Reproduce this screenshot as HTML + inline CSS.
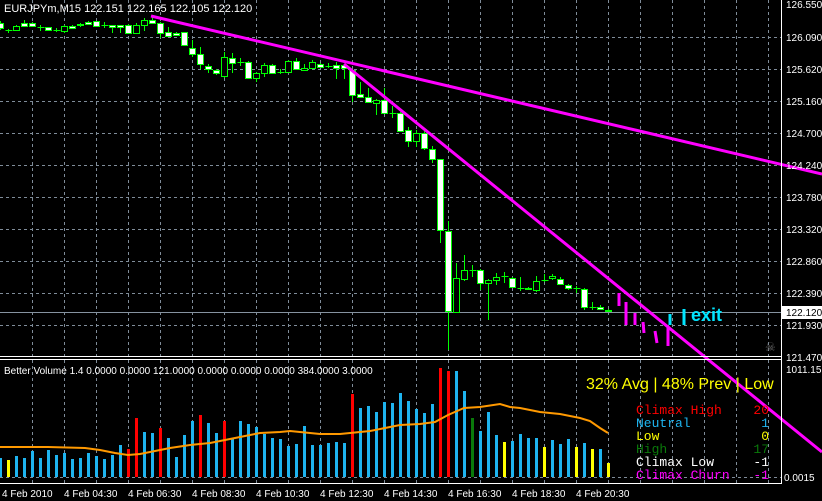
<!DOCTYPE html>
<html><head><meta charset="utf-8"><style>
html,body{margin:0;padding:0;background:#000;width:822px;height:501px;overflow:hidden}
svg{display:block}
text{font-family:"Liberation Sans",sans-serif}
text.m{font-family:"Liberation Mono",monospace;font-size:13px}
</style></head><body>
<svg id="s" width="822" height="501" xmlns="http://www.w3.org/2000/svg">
<rect width="822" height="501" fill="#000"/>
<g id="grid" stroke="#7f8c99" stroke-width="1" stroke-dasharray="3,3"></g>
<line x1="0" y1="312.5" x2="781" y2="312.5" stroke="#8693a0"/>
<g id="candles"></g>
<g id="vol"></g>
<polyline fill="none" stroke="#ff9900" stroke-width="2" points="0,447 48,447 85,448 100,450 115,453 128,455 140,454 150,452 170,448 190,445 210,443 230,439 250,435 260,433 280,432 290,431 300,432 320,434 340,434 350,433 370,431 390,427 400,425 420,424 435,422 448,415 464,408 480,407 500,404 510,407 520,408 540,412 560,414 580,418 590,421 600,428 608,433"/>
<g stroke="#ff00ff" stroke-width="3" fill="none">
<line x1="151" y1="16" x2="822" y2="174"/>
<line x1="344" y1="64" x2="822" y2="452"/>
</g>
<g stroke="#ff00ff" stroke-width="3">
<line x1="619" y1="293" x2="619" y2="306"/>
<line x1="626" y1="302" x2="626" y2="325"/>
<line x1="635" y1="313" x2="635" y2="325"/>
<line x1="643" y1="322" x2="644" y2="333"/>
<line x1="655" y1="331" x2="657" y2="343"/>
<line x1="668" y1="326" x2="668" y2="346"/>
</g>
<g stroke="#00e5ff" stroke-width="3">
<line x1="670" y1="314" x2="670" y2="325"/>
<line x1="684" y1="309" x2="684" y2="325"/>
</g>
<text x="691" y="321" fill="#00e5ff" font-size="18" font-weight="bold">exit</text>
<text x="4" y="12" fill="#fff" font-size="11">EURJPYm,M15  122.151 122.165 122.105 122.120</text>
<line x1="0" y1="356.5" x2="781" y2="356.5" stroke="#fff"/>
<line x1="0" y1="359.5" x2="781" y2="359.5" stroke="#fff"/>
<line x1="0" y1="483.5" x2="781" y2="483.5" stroke="#fff"/>
<line x1="781.5" y1="0" x2="781.5" y2="484" stroke="#fff"/>
<text x="4" y="374" fill="#fff" font-size="10">Better Volume 1.4 0.0000 0.0000 121.0000 0.0000 0.0000 0.0000 384.0000 3.0000</text>
<text x="586" y="389" fill="#ffff00" font-size="16">32% Avg | 48% Prev | Low</text>
<text class="m" x="636" y="414" fill="#ff0000">Climax High</text><text class="m" x="769" y="414" fill="#ff0000" text-anchor="end">20</text>
<text class="m" x="636" y="427" fill="#1eb4ef">Neutral</text><text class="m" x="769" y="427" fill="#1eb4ef" text-anchor="end">1</text>
<text class="m" x="636" y="440" fill="#ffff00">Low</text><text class="m" x="769" y="440" fill="#ffff00" text-anchor="end">0</text>
<text class="m" x="636" y="453" fill="#0a7a0a">High</text><text class="m" x="769" y="453" fill="#0a7a0a" text-anchor="end">17</text>
<text class="m" x="636" y="466" fill="#fff">Climax Low</text><text class="m" x="769" y="466" fill="#fff" text-anchor="end">-1</text>
<text class="m" x="636" y="479" fill="#ff00ff">Climax Churn</text><text class="m" x="769" y="479" fill="#ff00ff" text-anchor="end">-1</text>
<g fill="#fff" font-size="10">
<text x="786" y="8">126.550</text><text x="786" y="41">126.090</text><text x="786" y="73">125.620</text>
<text x="786" y="105">125.160</text><text x="786" y="137">124.700</text><text x="786" y="169">124.240</text>
<text x="786" y="201">123.780</text><text x="786" y="233">123.320</text><text x="786" y="265">122.860</text>
<text x="786" y="297">122.390</text><text x="786" y="329">121.930</text><text x="786" y="361">121.470</text>
<text x="786" y="373">1011.15</text><text x="784" y="481">0.0015</text>
</g>
<rect x="782" y="306" width="40" height="13" fill="#fff"/>
<text x="786" y="316" fill="#000" font-size="10">122.120</text>
<text x="765" y="351" fill="#666" font-size="12">☠</text>
<g fill="#fff" font-size="10">
<text x="2" y="497">4 Feb 2010</text><text x="64" y="497">4 Feb 04:30</text><text x="128" y="497">4 Feb 06:30</text>
<text x="192" y="497">4 Feb 08:30</text><text x="256" y="497">4 Feb 10:30</text><text x="320" y="497">4 Feb 12:30</text>
<text x="384" y="497">4 Feb 14:30</text><text x="448" y="497">4 Feb 16:30</text><text x="512" y="497">4 Feb 18:30</text>
<text x="576" y="497">4 Feb 20:30</text>
</g>
</svg>
<script>
var NS="http://www.w3.org/2000/svg";
function el(p,t,a){var e=document.createElementNS(NS,t);for(var k in a)e.setAttribute(k,a[k]);p.appendChild(e);return e;}
var g=document.getElementById('grid');
for(var x=32;x<=768;x+=32){el(g,'line',{x1:x+.5,y1:0,x2:x+.5,y2:356});el(g,'line',{x1:x+.5,y1:360,x2:x+.5,y2:483});}
for(var y=37;y<=341;y+=32){el(g,'line',{x1:0,y1:y+.5,x2:781,y2:y+.5});}
el(g,'line',{x1:0,y1:477.5,x2:781,y2:477.5});
var C=[[0,23,28,21,30,'w'],[8,30,30,29,33,'d'],[16,26,30,25,31,'h'],[24,23,26,20,27,'w'],[32,23,26,22,27,'w'],[40,27,27,25,31,'d'],[48,27,30,27,31,'w'],[56,30,30,28,32,'d'],[64,26,31,25,33,'h'],[72,26,28,25,29,'w'],[80,24,25,23,27,'h'],[88,22,24,21,25,'w'],[96,21,26,21,27,'w'],[104,25,25,22,28,'d'],[112,25,27,25,33,'w'],[120,25,27,25,33,'w'],[128,25,33,24,34,'w'],[136,25,33,23,34,'h'],[144,20,25,18,31,'h'],[152,20,23,15,24,'w'],[160,23,33,22,38,'w'],[168,32,36,27,37,'w'],[176,33,35,32,36,'w'],[184,32,45,32,46,'w'],[192,48,54,40,57,'w'],[200,54,64,47,69,'w'],[208,66,69,64,73,'w'],[216,70,73,69,75,'w'],[224,57,76,52,78,'h'],[232,58,63,53,73,'w'],[240,62,62,58,66,'d'],[248,62,78,61,79,'w'],[256,73,78,72,82,'h'],[264,65,73,63,77,'h'],[272,65,73,64,74,'w'],[280,72,72,69,74,'d'],[288,61,72,60,73,'h'],[296,61,69,58,70,'w'],[304,68,70,64,71,'h'],[312,62,68,60,69,'h'],[320,64,67,63,68,'w'],[328,66,66,63,68,'d'],[336,65,68,62,79,'w'],[344,65,68,64,79,'w'],[352,70,95,69,102,'w'],[360,94,97,82,98,'w'],[368,97,102,88,103,'w'],[376,100,103,99,115,'h'],[384,100,113,88,114,'w'],[392,113,113,106,118,'d'],[400,113,131,112,132,'w'],[408,130,141,127,147,'w'],[416,133,141,130,147,'h'],[424,133,148,130,150,'w'],[432,149,159,146,163,'w'],[440,159,230,159,243,'w'],[448,231,311,221,350,'w'],[456,278,312,263,313,'h'],[464,270,279,255,281,'h'],[472,270,270,265,277,'d'],[480,270,283,269,290,'w'],[488,280,283,279,320,'h'],[496,277,280,273,285,'h'],[504,276,276,272,283,'d'],[512,278,287,277,288,'w'],[520,288,288,277,291,'d'],[528,288,289,287,290,'h'],[536,281,290,276,292,'h'],[544,280,280,274,282,'d'],[552,276,278,274,280,'h'],[560,279,284,277,285,'w'],[568,285,288,284,290,'w'],[576,288,288,286,293,'d'],[584,289,307,288,310,'w'],[592,307,307,302,310,'d'],[600,307,309,305,310,'w'],[608,310,311,309,312,'w']];
var cg=document.getElementById('candles');
C.forEach(function(c){var x=c[0]+.5;
el(cg,'line',{x1:x,y1:c[3],x2:x,y2:c[4],stroke:'#00ff00','stroke-width':1});
if(c[5]=='d'){el(cg,'line',{x1:x-3,y1:c[1]+.5,x2:x+4,y2:c[1]+.5,stroke:'#00ff00','stroke-width':1});}
else{el(cg,'rect',{x:x-3,y:c[1]+.5,width:6,height:Math.max(1,c[2]-c[1]),fill:c[5]=='w'?'#fff':'#000',stroke:'#00ff00','stroke-width':1});}
});
var B='#1eb4ef',R='#ff0000',Y='#ffff00',G='#0a7a0a';
var V=[[0,458,B],[8,460,Y],[16,456,B],[24,458,B],[32,451,B],[40,458,B],[48,450,B],[56,455,B],[64,453,B],[72,459,B],[80,458,B],[88,453,B],[96,456,B],[104,459,B],[112,455,B],[120,445,B],[128,449,R],[136,418,R],[144,432,B],[152,433,B],[160,428,R],[168,438,B],[176,457,B],[184,435,B],[192,421,B],[200,415,R],[208,423,B],[216,433,B],[224,421,R],[232,439,B],[240,421,B],[248,424,B],[256,427,B],[264,434,B],[272,438,B],[280,439,B],[288,446,B],[296,444,B],[304,426,B],[312,445,B],[320,445,B],[328,443,B],[336,442,B],[344,443,B],[352,394,R],[360,408,B],[368,406,B],[376,412,B],[384,402,B],[392,403,B],[400,393,B],[408,401,B],[416,409,B],[424,413,B],[432,404,B],[440,368,R],[448,371,R],[456,371,B],[464,391,B],[472,418,G],[480,431,B],[488,412,B],[496,435,B],[504,442,Y],[512,441,B],[520,434,B],[528,438,B],[536,438,B],[544,447,Y],[552,440,B],[560,444,B],[568,439,B],[576,447,Y],[584,443,B],[592,449,Y],[600,449,B],[608,463,Y]];
var vg=document.getElementById('vol');
V.forEach(function(v){el(vg,'rect',{x:v[0]-1,y:v[1],width:3,height:477-v[1],fill:v[2]});});
</script>
</body></html>
